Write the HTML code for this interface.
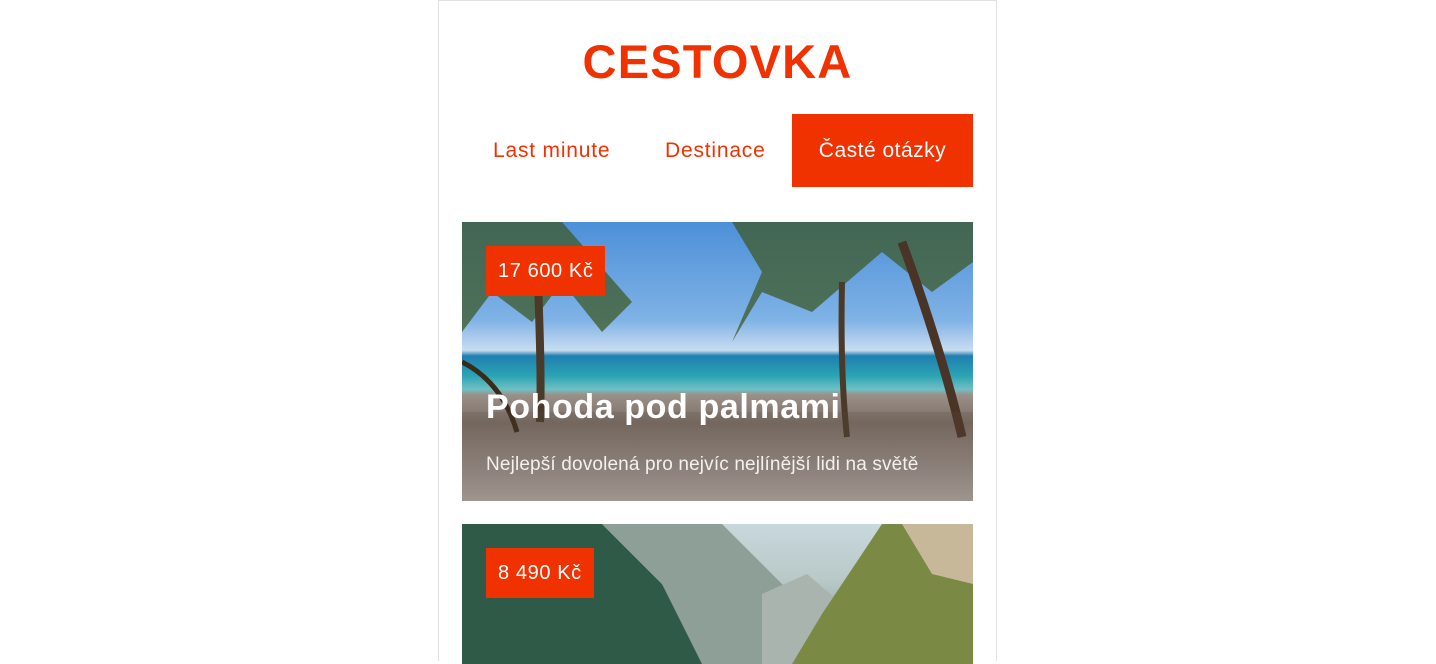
<!DOCTYPE html>
<html><head><meta charset="utf-8"><style>
body{margin:0;background:#fff;font-family:"Liberation Sans",sans-serif;width:1436px;height:643px;overflow:hidden;position:relative}
.wrap{position:absolute;left:438px;top:0;width:557px;height:660px;border:1px solid #e2e2e2;border-bottom:none}
.logo{position:absolute;left:0;width:557px;top:34px;text-align:center;color:#f03100;font-weight:bold;font-size:47px;letter-spacing:1.2px;line-height:54px}
.nav{position:absolute;top:113px;height:73px;line-height:73px;color:#f03100;font-size:21px;letter-spacing:0.8px}
.act{background:#f03100;color:#fff;left:353px;width:181px;text-align:center;letter-spacing:0.5px}
.card{position:absolute;left:23px;width:511px;overflow:hidden}
.price{position:absolute;left:24px;top:24px;background:#f03100;color:#fff;font-size:20px;height:50px;line-height:50px;padding:0 12px;letter-spacing:0.6px}
</style></head><body>
<div class="wrap">
<div class="logo">CESTOVKA</div>
<div class="nav" style="left:54px">Last minute</div>
<div class="nav" style="left:226px">Destinace</div>
<div class="nav act">Časté otázky</div>

<div class="card" style="top:221px;height:279px;background:linear-gradient(180deg,#4d8fd8 0%,#7fb2e6 35%,#c9dcef 46%,#1f7fb0 48%,#2aa3b3 55%,#6fc0c3 60%,#9b9088 62%,#7a6e66 72%,#9c928c 90%,#b0a8a3 100%)">
<svg width="511" height="279" style="position:absolute;left:0;top:0">
<g fill="#3d5a28" opacity="0.75">
<path d="M0 0 L100 0 L170 80 L140 110 L100 60 L70 100 L30 70 L0 110 Z"/>
<path d="M270 0 L511 0 L511 40 L470 70 L420 30 L350 90 L300 70 L270 120 L300 50 Z"/>
</g>
<path d="M75 40 Q80 150 78 200" stroke="#4a3a2a" stroke-width="8" fill="none"/>
<path d="M380 60 Q378 150 385 215" stroke="#4a3a2a" stroke-width="6" fill="none"/>
<path d="M440 20 Q480 130 500 215" stroke="#4a3426" stroke-width="9" fill="none"/>
<path d="M0 140 Q40 160 55 210" stroke="#3a2a1a" stroke-width="5" fill="none"/>
<rect x="0" y="190" width="511" height="89" fill="#5a4a40" opacity="0.2"/>
</svg>
<div class="price">17 600 Kč</div>
<div style="position:absolute;left:24px;top:166px;color:#fff;font-weight:bold;font-size:34px;letter-spacing:0.6px">Pohoda pod palmami</div>
<div style="position:absolute;left:24px;top:232px;color:#f4f0ee;font-size:19px;letter-spacing:0.15px">Nejlepší dovolená pro nejvíc nejlínější lidi na světě</div>
</div>

<div class="card" style="top:523px;height:140px;background:linear-gradient(180deg,#c8d8dc 0%,#b9c9c8 40%,#6e8a7a 100%)">
<svg width="511" height="140" style="position:absolute;left:0;top:0">
<path d="M0 0 L140 0 L200 60 L240 130 L240 140 L0 140Z" fill="#2f5a48"/>
<path d="M140 0 L260 0 L310 50 L330 70 L360 70 L300 140 L240 140 L200 60Z" fill="#8e9f98"/>
<path d="M300 70 L345 50 L380 80 L360 140 L300 140Z" fill="#a9b4ae"/>
<path d="M511 0 L420 0 L360 90 L330 140 L511 140Z" fill="#7a8a44"/>
<path d="M440 0 L511 0 L511 60 L470 50Z" fill="#c8b89a"/>
</svg>
<div class="price">8 490 Kč</div>
</div>
</div>
</body></html>
